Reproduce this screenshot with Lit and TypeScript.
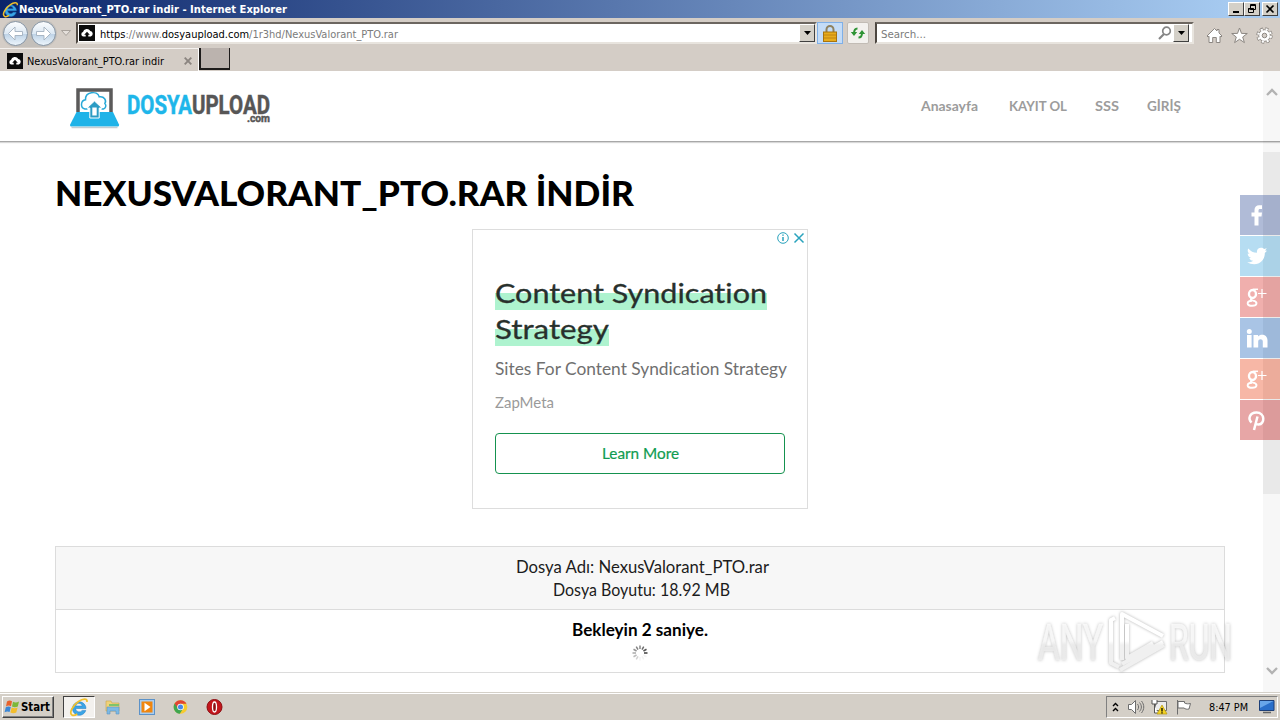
import { LitElement, html, css, svg } from "lit";
import { customElement } from "lit/decorators.js";

/* A line of text fitted to a given width; base is the baseline inside the line box. */
const line = (text: any, w: number, h: number, base: number, cls: string) => html`
  <svg class="line ${cls}" width=${w} height=${h}><text x="0" y=${base} textLength=${w} lengthAdjust="spacingAndGlyphs">${text}</text></svg>`;

const ieIcon = (s: number) => html`<svg class="ico" width=${s} height=${s} viewBox="0 0 16 16">
  <path d="M13.6 9.2H5.2a3 3 0 0 0 5.4 1.5h2.8A5.4 5.4 0 1 1 13.6 9.2zM5.3 7.2h5.3a2.7 2.7 0 0 0-5.3 0z" fill="#3aa5e6" stroke="#1b76c0" stroke-width=".4" fill-rule="evenodd"/>
  <path d="M2.6 14.6C-.5 13 3.2 6.5 7.6 3.6c3.4-2.4 7.2-3 6.8.4M2.6 14.6c1.2.4 3-.3 4-1" fill="none" stroke="#f1c02c" stroke-width="1.4"/></svg>`;

const favicon = html`<svg class="ico" width="16" height="16" viewBox="0 0 16 16"><rect width="16" height="16" fill="#0b0b0b"/>
  <path d="M4.4 11.6a2.3 2.3 0 0 1-.4-4.5A3.9 3.9 0 0 1 11.300 6a2.900 2.900 0 0 1 .5 5.600H9.300V9.700h1.500L8 6.700 5.200 9.700h1.500v1.900z" fill="#fff"/></svg>`;

const round = (back: boolean) => html`<svg class="ico" width="27" height="27" viewBox="0 0 27 27">
  <defs><linearGradient id="b" x1="0" y1="0" x2="0" y2="1"><stop offset="0" stop-color="#fdfeff"/><stop offset=".5" stop-color="#dce8f3"/><stop offset=".52" stop-color="#bdd2e6"/><stop offset="1" stop-color="#eef6fc"/></linearGradient></defs>
  <circle cx="13.500" cy="13.500" r="12" fill="url(#b)" stroke="#8694a3"/>
  <path d=${back ? "M13 7l-6.500 6.500L13 20v-4.500h7.500v-4H13z" : "M14 7l6.500 6.500L14 20v-4.500H6.500v-4H14z"} fill="#fff" stroke="#a3b1bf" stroke-width=".9"/></svg>`;

const dropBtn = html`<div class="drop"><svg width="7" height="4"><path d="M0 0h7L3.500 4z"/></svg></div>`;

const gplus = svg`<g fill="none" stroke="#fff"><ellipse cx="12.500" cy="17" rx="3.500" ry="4" stroke-width="2.400"/><path d="M13 12.300h5" stroke-width="1.500"/><path d="M13 20.800c-3 1-3 2.200 0 2.800 5 1 4.500 5.200-.8 5.200-6 0-6-4.800-.2-5" stroke-width="1.900"/><path d="M22 12v9M18 16.500h8.500" stroke-width="1.200"/></g>`;

const socials = [
  { c: "fb", g: svg`<path d="M14.500 30.500v-9h-3v-4h3v-2.500c0-3.200 2-4.800 4.600-4.800h2.900v3.800h-1.900c-1.200 0-1.600.6-1.600 1.600v1.900h3.500l-.5 4h-3v9z" fill="#fff"/>` },
  { c: "tw", g: svg`<path d="M27 14.700l-2.200 2.200c.3 6.300-4.300 11.400-10.600 11.400-2.600 0-5-.7-7-2 2.400.2 4.400-.4 5.900-1.600-1.900-.1-3.300-1.200-3.800-2.800h1.800C9 21.300 7.700 19.700 7.700 17.500l1.900.5c-2-1.500-2.400-3.800-1.300-5.600 2.300 2.700 5 4.200 8.700 4.400-.6-3 1.500-5 4-5 1.300 0 2.300.4 3.100 1.300l2.700-.9-1.700 2.200z" fill="#fff"/>` },
  { c: "gp", g: gplus },
  { c: "li", g: svg`<path d="M7 17h4.600v12.500H7zM9.300 11a2.500 2.500 0 1 1 0 5 2.500 2.500 0 0 1 0-5zM13.500 17h4.500v1.600c2.500-3 9.500-2.500 9.500 4v6.900h-4.700v-6.100c0-3-4.600-2.800-4.600 0v6.100h-4.700z" fill="#fff"/>` },
  { c: "gq", g: gplus },
  { c: "pi", g: svg`<path d="M11.600 22.500c-4-3.500-2-9.800 4.700-9.900 9-.2 8.800 11.500 2.300 12-1.400.1-2.300-.6-2.700-1.200M17.500 16.500L14 30" fill="none" stroke="#fff" stroke-width="2.500"/>` },
];

@customElement("app-root")
export class AppRoot extends LitElement {
  static styles = css`
    :host { display: flex; flex-direction: column; width: 1280px; height: 720px; overflow: hidden; background: #fff; font-family: "DejaVu Sans Condensed", "DejaVu Sans", sans-serif; }
    * { box-sizing: border-box; }
    svg { display: block; flex: none; overflow: visible; }
    text { font-variant-ligatures: none; }
    .title { height: 18px; display: flex; align-items: center; background: linear-gradient(90deg, #0a246a, #a6caf0 96%); padding: 0 2px; flex: none; }
    .ui { font-size: 11px; fill: #000; font-family: "DejaVu Sans Condensed", "DejaVu Sans", sans-serif; }
    .white { fill: #fff; font-weight: bold; }
    .grey { fill: #7b7b7b; }
    .st { font-weight: bold; font-size: 12px; }
    .wbtns { display: flex; margin-left: auto; }
    .wb { width: 16px; height: 14px; background: #d4d0c8; border: 1px solid; border-color: #fff #404040 #404040 #fff; display: grid; place-items: center; }
    .wb.x { margin-left: 2px; }
    .bar { height: 30px; background: #d4cdc6; display: flex; align-items: center; flex: none; padding-left: 2px; }
    .circles { display: flex; gap: 1px; background: #c3bfba; border-radius: 14px; }
    .tri { margin: 0 5px 0 4px; }
    .field { height: 22px; background: #fff; border: 2px solid; border-color: #6c6660 #e8e4de #e8e4de #4d4741; display: flex; align-items: center; }
    .addr { width: 741px; padding-left: 1px; }
    .addr .ui { margin-left: 5px; }
    .drop { width: 16px; height: 18px; margin-left: auto; background: #d4d0c8; border: 1px solid; border-color: #fff #404040 #404040 #fff; display: grid; place-items: center; flex: none; }
    .lock { width: 26px; height: 22px; background: #c4dcf7; border: 1px solid #7fb0e8; display: grid; place-items: center; }
    .ref { width: 22px; height: 22px; margin: 0 6px 0 4px; background: #f3f1ee; border: 1px solid #c2bcb5; border-radius: 2px; display: grid; place-items: center; }
    .search { width: 319px; padding: 0 3px 0 4px; }
    .search .mag { margin-left: auto; margin-right: 1px; }
    .search .drop { margin-left: 0; }
    .tools { display: flex; gap: 8px; padding: 4px 0 0 12px; }
    .tabs { height: 23px; background: #d4cdc6; display: flex; flex: none; }
    .tab { width: 199px; display: flex; align-items: center; padding: 1px 0 0 7px; gap: 4px; border-top: 1px solid #f4f1ee; border-right: 1px solid #fff; }
    .tab .cls { margin-left: 16px; }
    .newtab { width: 31px; height: 22px; background: #bbb3ae; border: solid #1d1b1a; border-width: 0 1px 2px 2px; }
    .page { position: relative; height: 621px; flex: none; display: flex; flex-direction: column; }
    .head { height: 71px; border-bottom: 1px solid #a8a8a8; box-shadow: 0 1px 1px #d8d8d8; display: flex; padding: 16px 99px 0 70px; flex: none; }
    .brand { display: flex; flex-direction: column; margin-left: 8px; padding-top: 8px; }
    .logo { font: bold 25.500px "Liberation Sans Narrow", Roboto, sans-serif; fill: #575656; stroke: #575656; stroke-width: .5; }
    .sky { fill: #1eb6ea; stroke: #1eb6ea; }
    .com { font-size: 11.500px; align-self: flex-end; }
    nav { margin-left: auto; display: flex; gap: 28px; padding-top: 10px; }
    nav .line:first-child { margin-right: 3px; }
    .nav { font: bold 13px Lato, sans-serif; fill: #9c9c9c; }
    .body { padding: 29px 55px 0; display: flex; flex-direction: column; }
    .h1 { font: 900 35px Lato, sans-serif; fill: #000; }
    .ad { position: relative; align-self: center; width: 336px; height: 280px; margin-top: 18px; border: 1px solid #ddd; padding: 45px 22px 0; display: flex; flex-direction: column; align-items: flex-start; }
    .choices { position: absolute; top: 2px; right: 2px; display: flex; gap: 4px; }
    .hl { height: 36px; background: linear-gradient(transparent 18px, #aef3cf 18px, #aef3cf 35px, transparent 35px); }
    .t1 { font: 400 27.500px Lato, "Open Sans", sans-serif; fill: #28302c; stroke: #28302c; stroke-width: .3; }
    .t2 { font: 16.500px Lato, sans-serif; fill: #707070; }
    .t3 { font: 15px Lato, sans-serif; fill: #9a9a9a; margin-top: 8px; }
    .cta { width: 290px; height: 41px; margin-top: 18px; border: 1px solid #15924f; border-radius: 4px; display: grid; place-items: center; }
    .t4 { font: 15.500px Lato, sans-serif; fill: #119c51; stroke: #119c51; stroke-width: .2; }
    .info { margin-top: 37px; border: 1px solid #dcdcdc; height: 127px; }
    .row { display: flex; flex-direction: column; align-items: center; height: 62px; padding-top: 8px; }
    .row.a { background: #f7f7f7; border-bottom: 1px solid #dcdcdc; height: 63px; }
    .r { font: 16.500px Lato, sans-serif; fill: #1c1c1c; }
    .adi { margin-left: 4px; } .boy { margin-left: 2px; }
    .b { font-weight: 700; fill: #000; }
    .scroll { position: absolute; right: 0; top: 0; width: 17px; height: 621px; background: rgba(0,0,0,.03); display: flex; flex-direction: column; align-items: center; }
    .up { margin-top: 17px; } .down { margin-top: auto; margin-bottom: 17px; }
    .thumb { width: 17px; height: 342px; margin-top: 56px; background: rgba(0,0,0,.055); }
    .social { position: absolute; right: 0; top: 124px; display: flex; flex-direction: column; gap: 1px; }
    .s { width: 40px; height: 40px; }
    .fb { background: rgba(103,124,178,.52); } .tw { background: rgba(110,188,230,.5); } .gp { background: rgba(224,88,84,.48); }
    .li { background: rgba(84,138,204,.5); } .gq { background: rgba(240,112,78,.5); } .pi { background: rgba(206,74,74,.49); }
    .wm { position: absolute; left: 1036px; top: 537px; filter: drop-shadow(0 0 1.500px rgba(0,0,0,.3)); }
    .wmt { font: 400 50px "Liberation Sans Narrow", Roboto, sans-serif; }
    .task { height: 28px; flex: none; background: #d4cfc7; border-top: 1px solid #d4d0c8; box-shadow: inset 0 1px #fff; display: flex; align-items: center; padding: 1px 2px 0; }
    .start { width: 52px; height: 22px; border: 1px solid; border-color: #fff #404040 #404040 #fff; box-shadow: inset -1px -1px #808080; display: flex; align-items: center; padding-left: 1px; }
    .act { width: 32px; height: 22px; margin-left: 9px; background: #f3f1ee; border: 1px solid; border-color: #404040 #fff #fff #404040; display: grid; place-items: center; }
    .quick { display: flex; gap: 18px; margin-left: 10px; }
    .tray { margin-left: auto; width: 172px; height: 22px; border: 1px solid; border-color: #808080 #fff #fff #808080; display: flex; align-items: center; padding-left: 5px; gap: 7px; }
    .clock { margin-left: 10px; } .desk { margin-left: 4px; }
  `;

  render() {
    return html`
      <div class="title">${ieIcon(17)}
        ${line("NexusValorant_PTO.rar indir - Internet Explorer", 268, 18, 13, "ui white")}
        <div class="wbtns">
          <div class="wb"><svg width="10" height="10"><path d="M2 7h6v2H2z"/></svg></div>
          <div class="wb"><svg width="10" height="10"><path d="M3.500.5h5v5h-5zM3 1.500h6M1.500 4.500h5v4h-5zM1 5h6" fill="#d4d0c8" stroke="#000"/></svg></div>
          <div class="wb x"><svg width="10" height="10"><path d="M1.500 1.500l7 7M8.500 1.500l-7 7" stroke="#000" stroke-width="1.700"/></svg></div>
        </div>
      </div>
      <div class="bar">
        <div class="circles">${round(true)}${round(false)}</div>
        <svg class="tri" width="10" height="7"><path d="M.5.500h9L5 5.500z" fill="#e4dfda" stroke="#a8a29c"/></svg>
        <div class="field addr">${favicon}
          ${line(svg`https<tspan fill="#7b7b7b">://www.</tspan>dosyaupload.com<tspan fill="#7b7b7b">/1r3hd/NexusValorant_PTO.rar</tspan>`, 298, 18, 14, "ui")}
          ${dropBtn}</div>
        <div class="lock"><svg width="14" height="17" viewBox="0 0 14 17"><path d="M3.500 8V4.500a3.500 3.500 0 0 1 7 0V8" fill="none" stroke="#8f8260" stroke-width="2"/><rect x=".5" y="7" width="13" height="9.500" fill="#e7ac1c" stroke="#a8740e"/><path d="M1 10h12M1 13h12" stroke="#c08413"/></svg></div>
        <div class="ref"><svg width="16" height="16" viewBox="0 0 16 16" fill="none" stroke="#2f9436" stroke-width="2"><path d="M7.500 3.500C5 3.500 4 5 4 8.500M8.500 12.500c2.500 0 3.500-1 3.500-4.500"/><path d="M.8 7h6.400L4 11zM8.800 9h6.400L12 5z" fill="#2f9436" stroke="none"/></svg></div>
        <div class="field search">${line("Search...", 45, 18, 14, "ui grey")}
          <svg class="mag" width="14" height="14" fill="none" stroke="#858585"><circle cx="8.500" cy="5" r="3.800" stroke-width="1.700"/><path d="M6 8L1 13" stroke-width="2.200"/></svg>${dropBtn}</div>
        <div class="tools">
          <svg width="17" height="17" viewBox="0 0 17 17"><path d="M1 9l7.500-7.500L11 4V2.500h2V6l3 3-1 1-1-.8V15.500H10.300V10.500H6.700v5H3V9.200L2 10z" fill="#fff" stroke="#8c8782"/></svg>
          <svg width="17" height="17" viewBox="0 0 17 17"><path d="M8.500 1l2 5.400 5.800.1-4.600 3.500 1.700 5.600-4.900-3.300-4.900 3.300L5.300 10 .7 6.500l5.800-.1z" fill="#fff" stroke="#8c8782"/></svg>
          <svg width="17" height="17" viewBox="0 0 17 17"><circle cx="8.500" cy="8.500" r="6.500" fill="none" stroke="#8c8782" stroke-width="3.400" stroke-dasharray="2.950 2.150"/><circle cx="8.500" cy="8.500" r="5.800" fill="#fff" stroke="#8c8782"/><circle cx="8.500" cy="8.500" r="6.300" fill="none" stroke="#fff" stroke-width="2.200" stroke-dasharray="2 2.950" stroke-dashoffset="-.4"/><circle cx="8.500" cy="8.500" r="2.300" fill="#d4cdc6" stroke="#8c8782"/></svg>
        </div>
      </div>
      <div class="tabs">
        <div class="tab">${favicon}${line("NexusValorant_PTO.rar indir", 137, 18, 13, "ui")}
          <svg class="cls" width="8" height="8"><path d="M.7.700l6.600 6.600M7.300.700L.7 7.300" stroke="#8b8580" stroke-width="1.900"/></svg></div>
        <div class="newtab"></div>
      </div>
      <div class="page">
        <div class="head">
          <svg width="49" height="42" viewBox="0 0 49 42">
            <path d="M8 25V3h33v22" fill="#fff" stroke="#5b5a5a" stroke-width="3.500"/>
            <path d="M6.500 25H43l6 12.500c.3 1.500-.5 2-1.500 2h-46C.5 39.500-.2 39 .2 37.500z" fill="#1fb3e8"/><path d="M1.500 40.500h46" stroke="#c3cdd2" stroke-width="1.500"/>
            <path d="M17.500 22h-2.500c-5-1-4.500-8.500.5-9.200C15 5 27 3 29.200 9.800c5-1 7.600 4 5.700 6.700 2 2 .5 5-1.500 5.500H31.500" fill="#fff" stroke="#27a9d8" stroke-width="1.500"/>
            <path d="M24.500 14l7.500 7h-2.800V31h-9.400V21H17z" fill="#2b9cc4" stroke="#fff"/><path d="M22.300 20.500h4.400v8h-4.400z" fill="#fff"/></svg>
          <div class="brand">${line(svg`<tspan class="sky">DOSYA</tspan>UPLOAD`, 143, 19, 18.5, "logo")}
          ${line(".com", 23, 9, 8, "logo com")}</div>
          <nav>${line("Anasayfa", 57, 18, 14, "nav")}${line("KAYIT OL", 58, 18, 14, "nav")}${line("SSS", 24, 18, 14, "nav")}${line("GİRİŞ", 34, 18, 14, "nav")}</nav>
        </div>
        <div class="body">
          ${line("NEXUSVALORANT_PTO.RAR\u00a0İNDİR", 579, 40, 34.5, "h1")}
          <div class="ad">
            <div class="choices"><svg width="12" height="12" fill="none" stroke="#2aa3bd"><circle cx="6" cy="6" r="5.300"/><path d="M6 5v4M6 2.500v1.300" stroke-width="1.500"/></svg>
              <svg width="12" height="12"><path d="M1.500 1.500l9 9M10.500 1.500l-9 9" stroke="#2aa3bd" stroke-width="1.500"/></svg></div>
            <div class="hl">${line("Content Syndication", 272, 36, 27.5, "t1")}</div>
            <div class="hl">${line("Strategy", 114, 36, 27.5, "t1")}</div>
            ${line("Sites For Content Syndication Strategy", 292, 36, 27.5, "t2")}
            ${line("ZapMeta", 59, 24, 16.5, "t3")}
            <div class="cta">${line("Learn More", 77, 20, 15, "t4")}</div>
          </div>
          <div class="info">
            <div class="row a">${line("Dosya Adı: NexusValorant_PTO.rar", 253, 23, 17.5, "r adi")}${line("Dosya Boyutu: 18.92 MB", 177, 23, 17.5, "r boy")}</div>
            <div class="row">${line("Bekleyin 2 saniye.", 136, 27, 17.5, "r b")}
              <svg width="16" height="16" viewBox="-8 -8 16 16">${Array.from({ length: 12 }, (_, i) => svg`<path d="M0-4V-7.500" transform="rotate(${i * 30})" stroke="#333" stroke-width="1.500" opacity=${i <= 3 ? 0.6 + i * 0.12 : i < 7 ? 0.06 : 0.12 + (i - 6) * 0.1}/>`)}</svg></div>
          </div>
        </div>
        <svg class="wm" width="198" height="66" viewBox="0 0 198 66">
          <defs><linearGradient id="w" gradientUnits="userSpaceOnUse" x1="0" y1="0" x2="0" y2="66"><stop offset="0.500" stop-color="#fff"/><stop offset=".56" stop-color="#f0f0f0"/></linearGradient></defs>
          <g fill="url(#w)" stroke="url(#w)" stroke-width=".6" opacity=".8"><text class="wmt" x="2" y="52" textLength="65" lengthAdjust="spacingAndGlyphs">ANY</text>
          <text class="wmt" x="133" y="52" textLength="63" lengthAdjust="spacingAndGlyphs">RUN</text></g>
          <path d="M86 52V6L127 28M79 10l-4 2v43l8 4M91 16v34l26-15M127 34L86 56M84 62l44-25" fill="none" stroke="url(#w)" stroke-width="4" stroke-linejoin="round"/>
        </svg>
        <div class="scroll">
          <svg class="up" width="12" height="8"><path d="M1 7l5-5 5 5" fill="none" stroke="#b2b2b2" stroke-width="2.300"/></svg>
          <div class="thumb"></div>
          <svg class="down" width="12" height="8"><path d="M1 1l5 5 5-5" fill="none" stroke="#b2b2b2" stroke-width="2.300"/></svg>
        </div>
        <div class="social">${socials.map((s) => html`<div class="s ${s.c}"><svg width="40" height="40">${s.g}</svg></div>`)}</div>
      </div>
      <div class="task">
        <div class="start"><svg width="17" height="16" viewBox="0 0 17 16"><path d="M3 2.500c2-1.300 3.500-1 5-.2L7 7.200c-1.600-.8-3.200-.8-5 .2z" fill="#e8622c"/><path d="M9 2.800c2 1 4 .8 6-.3l-1.200 5c-2 1-3.900 1-5.800 0z" fill="#7cb83a"/><path d="M1.800 8.300c1.800-1 3.400-1 5-.2l-1.200 5c-1.600-.9-3.200-.8-5 .2z" fill="#3b87d6"/><path d="M7.700 8.500c2 1 3.900 1 5.900 0l-1.300 5c-2 1-3.900 1-5.900 0z" fill="#f3bd2c"/></svg>
          ${line("Start", 29, 18, 13, "ui st")}</div>
        <div class="act">${ieIcon(20)}</div>
        <div class="quick">
          <svg width="16" height="16"><path d="M1 2h5l1 2h7v8H1z" fill="#efd27a" stroke="#c9a548" stroke-width=".6"/><path d="M4 5h10v2H4z" fill="#7fc46a"/><path d="M2 8h12v7h-3v-3H5v3H2z" fill="#7db9e4" stroke="#5a96c2" stroke-width=".6"/></svg>
          <svg width="16" height="16"><rect x=".5" y=".5" width="15" height="15" fill="#a9cdf0" stroke="#5c92c8"/><rect x="2.500" y="2.500" width="11" height="11" fill="#f0860f"/><path d="M5.500 3.800l6 4.200-6 4.200z" fill="#fff"/></svg>
          <svg width="15" height="16" viewBox="0 0 16 16"><circle cx="8" cy="8" r="7.300" fill="#f7cb2e"/><path d="M8 8L1.700 4.300A7.300 7.300 0 0 0 7.200 15.300l3.500-5.500z" fill="#3fa650"/><path d="M8 4.500h6.400a7.300 7.300 0 0 0-12.700-.2L5 9z" fill="#e04434"/><circle cx="8" cy="8" r="3.500" fill="#fff"/><circle cx="8" cy="8" r="2.700" fill="#4688ea"/></svg>
          <svg width="16" height="16"><circle cx="8.500" cy="8" r="7.500" fill="#c4161c" stroke="#8c0c10"/><ellipse cx="8.500" cy="8" rx="2" ry="5" fill="#8e1014" stroke="#fff" stroke-width="1.300"/></svg>
        </div>
        <div class="tray">
          <svg width="7" height="10" fill="none" stroke="#000" stroke-width="1.400"><path d="M1 4l2.500-2.500L6 4M1 9l2.500-2.500L6 9"/></svg>
          <svg width="18" height="16" fill="#fff" stroke="#6d6d6d"><path d="M2.500 5.500h3l4-4v13l-4-4h-3z"/><path d="M11.500 5c1.500 2 1.500 4 0 6M13.500 3.500c2.500 3 2.500 6 0 9M15.500 2c3 4 3 8 0 12" fill="none"/></svg>
          <svg width="17" height="16"><path d="M4.500 2.500h11v9h-11z" fill="#ececec" stroke="#6d6d6d"/><path d="M1 1v4h5V1M3.500 5v9h3" fill="#fff" stroke="#555"/><path d="M11 6l5 9h-10z" fill="#f4d322" stroke="#b5960c" stroke-width=".7"/><path d="M11 9v3.500M11 13.300v1.200" stroke="#000" stroke-width="1.300"/></svg>
          <svg width="17" height="16" fill="#fff" stroke="#6d6d6d"><path d="M2.500 1v14.500"/><path d="M3 2.500h6.500v1.500c2 1 3.500 1 6 .5L14 10c-2 .6-4 0-5-1H3z"/></svg>
          ${line("8:47 PM", 39, 18, 13, "ui clock")}
          <svg class="desk" width="16" height="14"><path d="M.5.500h14.500v10H.5z" fill="#2a6fca" stroke="#1d3f78"/><path d="M1 1h13.500L1 8z" fill="#68a6ea"/><path d="M4 12.500h8" stroke="#666" stroke-width="1.500"/></svg>
        </div>
      </div>`;
  }
}
